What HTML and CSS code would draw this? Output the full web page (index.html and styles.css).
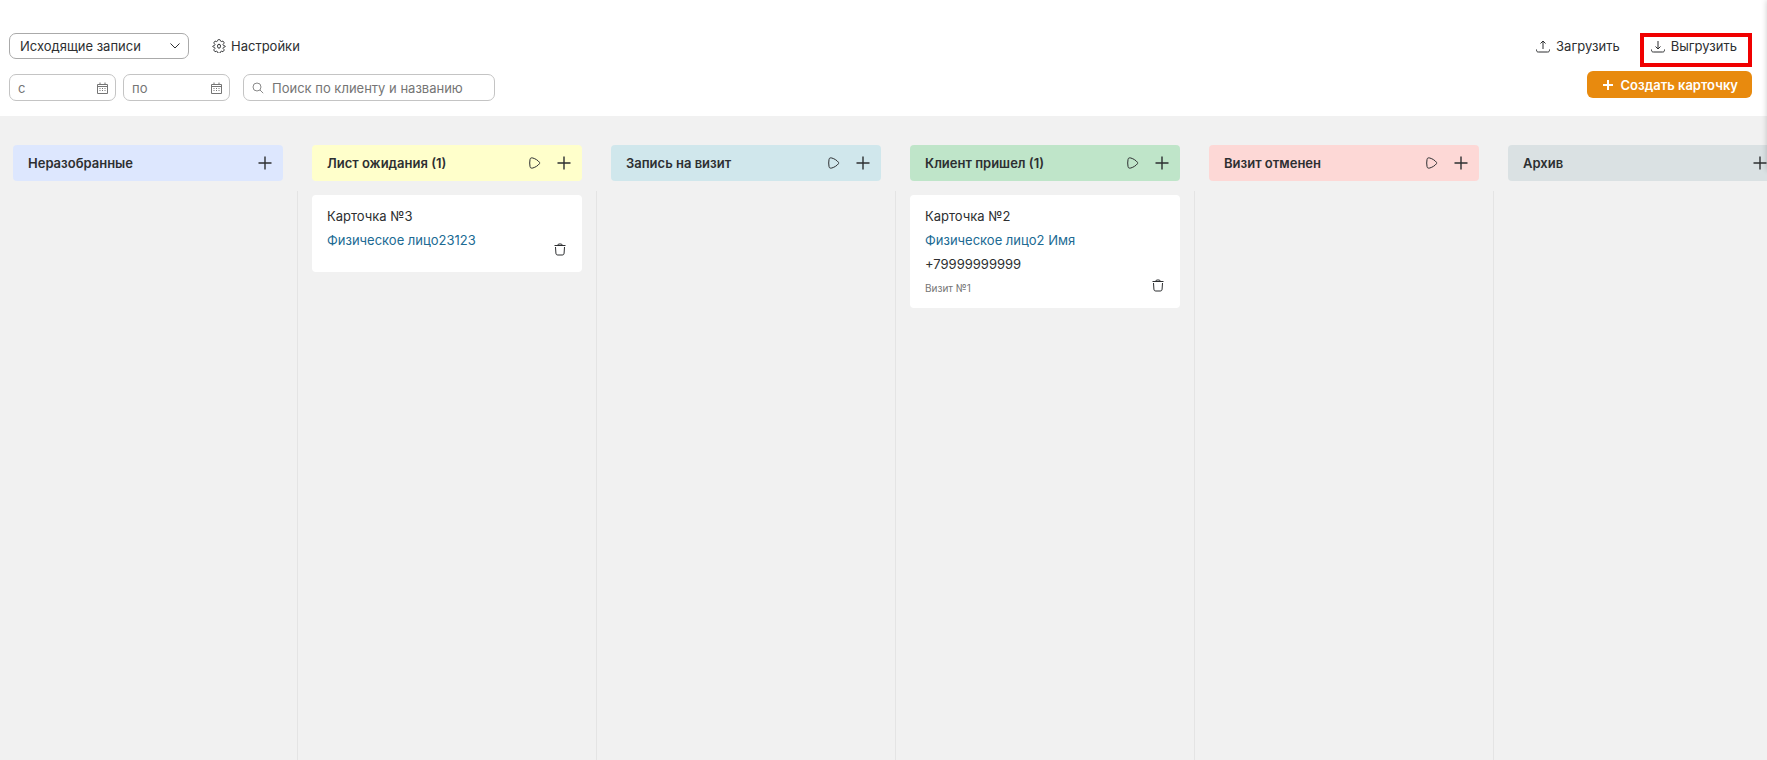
FILE: index.html
```html
<!DOCTYPE html>
<html lang="ru">
<head>
  <meta charset="UTF-8">
  <title>Исходящие записи</title>
  <meta name="viewport" content="width=device-width, initial-scale=1.0">
  <link rel="stylesheet" href="styles.css">
</head>
<body>
  <svg class="sprite" aria-hidden="true">
    <symbol id="plus" viewBox="0 0 14 14"><path d="M7 .5v13M.5 7h13"/></symbol>
    <symbol id="play" viewBox="0 0 12 12"><path d="M1 2.600C1 1 2.400.6 3.800 1c2.700.8 5 2.300 6.500 4.100.5.600.5 1.200 0 1.800C8.800 8.700 6.500 10.200 3.800 11 2.400 11.400 1 11 1 9.400.6 7.200.6 4.800 1 2.600z"/></symbol>
    <symbol id="trash" viewBox="0 0 12 13"><path d="M.5 2.500h11M3.500 2.500L4.500 1h3l1 1.500M1.500 4l.4 6c.1 1.500.6 2 2 2h4.200c1.400 0 1.900-.5 2-2l.4-6"/></symbol>
    <symbol id="calendar" viewBox="0 0 11 12"><path d="M.5 2.500h10v9H.5zM3 .5v2M8 .5v2M.5 4.500h10M2.500 6.500h1M5 6.500h1M7.500 6.500h1M2.500 8.500h1M5 8.500h1M7.500 8.500h1"/></symbol>
  </svg>

  <header class="toolbar">
    <div class="toolbar-row">
      <div class="select-wrap">
        <select class="field" aria-label="Тип записей">
          <option>Исходящие записи</option>
        </select>
        <svg class="chevron" viewBox="0 0 10 6"><path d="M.5.5L5 5 9.500.5"/></svg>
      </div>
      <button class="link-btn settings">
        <svg class="icon-gear" viewBox="0 0 14 14"><path d="M5.600 1.600C5.700.9 6 .6 6.500.6h1c.5 0 .8.3.9 1 .2.900.9 1.200 1.600.8.700-.4 1.200-.3 1.500.2l.5.800c.3.500.2.900-.4 1.300-.8.600-.8 1.300 0 1.800l.8.200c.6.100.9.300.9.700 0 .4-.3.600-.9.700l-.8.200c-.8.500-.8 1.200 0 1.800.6.400.7.800.4 1.300l-.5.800c-.3.500-.8.600-1.500.2-.7-.4-1.400-.1-1.600.8-.1.700-.4 1-.9 1h-1c-.5 0-.8-.3-.9-1-.2-.9-.9-1.200-1.600-.8-.7.400-1.200.3-1.500-.2l-.5-.8c-.3-.5-.2-.9.4-1.300.8-.6.8-1.300 0-1.800-1-.2-1.700-.4-1.700-.9s.7-.7 1.700-.9c.8-.5.8-1.200 0-1.800-.6-.4-.7-.8-.4-1.300l.5-.8c.3-.5.8-.6 1.500-.2.700.4 1.400.1 1.600-.8z"/><ellipse cx="7" cy="7.200" rx="1.500" ry="2"/></svg>
        Настройки
      </button>
      <div class="actions">
        <button class="link-btn">
          <svg class="icon-load" viewBox="0 0 14 13"><path d="M7 9V1M4.500 3.500L7 1l2.500 2.500M.5 9.500c0 2 .5 2.500 2 2.500h9c1.500 0 2-.5 2-2.500"/></svg>
          Загрузить
        </button>
        <button class="link-btn marked">
          <svg class="icon-load" viewBox="0 0 14 13"><path d="M7 1v8M4.500 6.500L7 9l2.500-2.500M.5 9.500c0 2 .5 2.500 2 2.500h9c1.500 0 2-.5 2-2.500"/></svg>
          Выгрузить
        </button>
      </div>
    </div>
    <div class="toolbar-row">
      <div class="date-wrap">
        <input class="field" type="text" placeholder="с" aria-label="Дата с">
        <svg class="icon-calendar"><use href="#calendar"/></svg>
      </div>
      <div class="date-wrap">
        <input class="field" type="text" placeholder="по" aria-label="Дата по">
        <svg class="icon-calendar"><use href="#calendar"/></svg>
      </div>
      <div class="search-wrap">
        <svg class="icon-search" viewBox="0 0 12 12"><circle cx="5" cy="5" r="4"/><path d="M8 8l3.200 3.200"/></svg>
        <input class="field" type="text" placeholder="Поиск по клиенту и названию" aria-label="Поиск">
      </div>
      <button class="create-btn">
        <svg class="icon-add" viewBox="0 0 10 10"><path d="M5 0v10M0 5h10"/></svg>
        Создать карточку
      </button>
    </div>
  </header>

  <main class="board">
    <section class="column">
      <div class="column-head blue">
        <h2>Неразобранные</h2>
        <button class="icon-btn" aria-label="Добавить"><svg class="icon-plus"><use href="#plus"/></svg></button>
      </div>
      <div class="column-body"></div>
    </section>

    <section class="column">
      <div class="column-head yellow">
        <h2>Лист ожидания (1)</h2>
        <button class="icon-btn" aria-label="Запустить"><svg class="icon-play"><use href="#play"/></svg></button>
        <button class="icon-btn" aria-label="Добавить"><svg class="icon-plus"><use href="#plus"/></svg></button>
      </div>
      <div class="column-body">
        <article class="card">
          <div class="card-info">
            <p>Карточка №3</p>
            <p><a href="#">Физическое лицо23123</a></p>
          </div>
          <button class="icon-btn delete" aria-label="Удалить"><svg class="icon-trash"><use href="#trash"/></svg></button>
        </article>
      </div>
    </section>

    <section class="column">
      <div class="column-head cyan">
        <h2>Запись на визит</h2>
        <button class="icon-btn" aria-label="Запустить"><svg class="icon-play"><use href="#play"/></svg></button>
        <button class="icon-btn" aria-label="Добавить"><svg class="icon-plus"><use href="#plus"/></svg></button>
      </div>
      <div class="column-body"></div>
    </section>

    <section class="column">
      <div class="column-head green">
        <h2>Клиент пришел (1)</h2>
        <button class="icon-btn" aria-label="Запустить"><svg class="icon-play"><use href="#play"/></svg></button>
        <button class="icon-btn" aria-label="Добавить"><svg class="icon-plus"><use href="#plus"/></svg></button>
      </div>
      <div class="column-body">
        <article class="card">
          <div class="card-info">
            <p>Карточка №2</p>
            <p><a href="#">Физическое лицо2 Имя</a></p>
            <p>+79999999999</p>
            <p class="visit">Визит №1</p>
          </div>
          <button class="icon-btn delete" aria-label="Удалить"><svg class="icon-trash"><use href="#trash"/></svg></button>
        </article>
      </div>
    </section>

    <section class="column">
      <div class="column-head red">
        <h2>Визит отменен</h2>
        <button class="icon-btn" aria-label="Запустить"><svg class="icon-play"><use href="#play"/></svg></button>
        <button class="icon-btn" aria-label="Добавить"><svg class="icon-plus"><use href="#plus"/></svg></button>
      </div>
      <div class="column-body"></div>
    </section>

    <section class="column">
      <div class="column-head gray">
        <h2>Архив</h2>
        <button class="icon-btn" aria-label="Добавить"><svg class="icon-plus"><use href="#plus"/></svg></button>
      </div>
      <div class="column-body"></div>
    </section>
  </main>

  <div class="side-panel"></div>
</body>
</html>
```
FILE: styles.css
```css
* {
  box-sizing: border-box;
}

body {
  margin: 0;
  min-height: 100vh;
  display: flex;
  flex-direction: column;
  overflow: hidden;
  font-family: Inter, "Noto Sans", sans-serif;
  font-size: 13px;
  line-height: 16px;
  color: #2d2f31;
  background-color: #f1f1f1;
}

button,
input,
select {
  font: inherit;
  color: inherit;
}

button {
  padding: 0;
  border: none;
  background: none;
  cursor: pointer;
}

svg {
  display: block;
  flex: none;
  fill: none;
  stroke: currentColor;
}

.sprite {
  position: absolute;
  width: 0;
  height: 0;
}

/* toolbar */
.toolbar {
  display: flex;
  flex-direction: column;
  gap: 15px;
  padding: 33px 15px 15px 9px;
  background-color: #fff;
}

.toolbar-row {
  display: flex;
  align-items: center;
}

.field {
  display: block;
  width: 100%;
  height: 27px;
  padding: 0 9px;
  border: 1px solid #c4c4c4;
  border-radius: 7px;
  background-color: #fff;
  outline: none;
}

.field::placeholder {
  color: #757575;
  opacity: 1;
}

.select-wrap,
.date-wrap,
.search-wrap {
  position: relative;
}

.select-wrap {
  width: 180px;
}

.select-wrap .field {
  appearance: none;
  height: 26px;
  padding: 0 10px;
  border-color: #aaa;
}

.chevron {
  position: absolute;
  right: 9px;
  top: 10px;
  width: 10px;
  height: 6px;
  pointer-events: none;
}

.date-wrap {
  width: 107px;
  margin-right: 7px;
}

.date-wrap .field {
  padding: 0 8px;
}

.icon-calendar {
  position: absolute;
  right: 8px;
  top: 8px;
  width: 11px;
  height: 12px;
  color: #757575;
}

.search-wrap {
  width: 252px;
  margin-left: 6px;
}

.search-wrap .field {
  padding-left: 28px;
}

.icon-search {
  position: absolute;
  left: 9px;
  top: 8px;
  width: 12px;
  height: 12px;
  color: #8a8a8a;
}

.link-btn {
  display: flex;
  align-items: center;
  gap: 6px;
}

.settings {
  margin-left: 23px;
  gap: 5px;
}

.icon-gear {
  width: 14px;
  height: 14px;
}

.icon-load {
  width: 14px;
  height: 13px;
}

.actions {
  display: flex;
  gap: 31px;
  margin-left: auto;
  padding-right: 15px;
}

.marked {
  position: relative;
}

.marked::after {
  content: "";
  position: absolute;
  top: -5px;
  right: -15px;
  bottom: -13px;
  left: -11px;
  border: 4px solid #f00000;
}

.create-btn {
  display: flex;
  align-items: center;
  gap: 8px;
  height: 27px;
  margin: -6px 0 0 auto;
  padding: 0 14px 0 16px;
  border-radius: 6px;
  font-weight: 600;
  color: #fff;
  background-color: #e88a0e;
}

.icon-add {
  width: 10px;
  height: 10px;
  stroke-width: 2;
}

/* board */
.board {
  flex: 1;
  display: flex;
  margin-left: -1px;
  padding-top: 29px;
}

.column {
  flex: none;
  display: flex;
  flex-direction: column;
  gap: 10px;
  width: 299px;
}

.column-head {
  display: flex;
  align-items: center;
  gap: 16px;
  height: 36px;
  margin: 0 15px 0 14px;
  padding: 0 11px 0 15px;
  border-radius: 4px;
}

.column-head h2 {
  flex: 1;
  margin: 0;
  font-size: 13px;
  font-weight: 600;
}

.column-body {
  flex: 1;
  padding: 4px 14px 0;
  border-right: 1px solid #e4e4e4;
}

.blue {
  background-color: #dde7fe;
}

.yellow {
  background-color: #ffffcb;
}

.cyan {
  background-color: #d0e7ec;
}

.green {
  background-color: #bfe5c9;
}

.red {
  background-color: #fdd8d6;
}

.gray {
  background-color: #dae1e3;
}

.icon-plus {
  width: 14px;
  height: 14px;
  stroke-width: 1.4;
}

.icon-play {
  width: 12px;
  height: 12px;
}

.icon-trash {
  width: 12px;
  height: 13px;
}

/* cards */
.card {
  display: flex;
  justify-content: space-between;
  min-height: 77px;
  padding: 9px 16px 8px 15px;
  border-radius: 4px;
  background-color: #fff;
}

.card p {
  margin: 0;
  line-height: 24px;
}

.card a {
  color: #206a93;
  text-decoration: none;
}

.card .visit {
  font-size: 10px;
  color: #757575;
}

.delete {
  align-self: flex-end;
  margin-bottom: 8px;
}

/* closed panel, only its shadow reaches the page */
.side-panel {
  position: fixed;
  top: 0;
  left: 100%;
  width: 40px;
  height: 170px;
  box-shadow: 0 0 6px rgba(0, 0, 0, 0.2);
}
```
